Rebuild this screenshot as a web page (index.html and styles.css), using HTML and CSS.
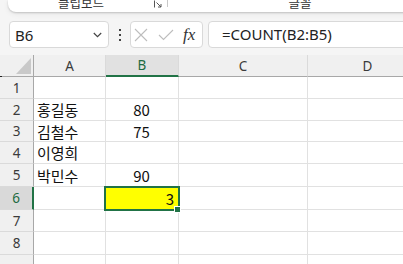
FILE: index.html
```html
<!DOCTYPE html>
<html lang="ko">
<head>
<meta charset="utf-8">
<link rel="stylesheet" href="styles.css">
</head>
<body>
<div class="app">
  <div class="ribbon">
    <div class="group g1">
      <span class="glabel">클립보드</span>
      <svg class="launcher" width="9" height="8" viewBox="0 0 9 8"><path d="M0.5 0.5V7.5" stroke="#555" fill="none"/><path d="M2.5 2.5L7 7M7 4V7H4" stroke="#555" fill="none"/></svg>
    </div>
    <div class="sep"></div>
    <div class="group g2"><span class="glabel">글꼴</span></div>
  </div>

  <div class="fbar">
    <div class="namebox">
      <span class="ref">B6</span>
      <svg class="chev" width="9" height="6" viewBox="0 0 9 6"><path d="M0.8 1L4.5 4.6L8.2 1" stroke="#444" stroke-width="1.2" fill="none"/></svg>
    </div>
    <div class="dots"><i></i><i></i><i></i></div>
    <div class="fxbox">
      <svg width="14" height="14" viewBox="0 0 14 14"><path d="M1 1L13 13M13 1L1 13" stroke="#bdbdbd" stroke-width="1.1" fill="none"/></svg>
      <svg width="16" height="12" viewBox="0 0 16 12"><path d="M1 6L5.5 10.5L15 1" stroke="#bdbdbd" stroke-width="1.1" fill="none"/></svg>
      <span class="fx">fx</span>
    </div>
    <div class="finput">=COUNT(B2:B5)</div>
  </div>

  <div class="sheet">
    <div class="grid">
      <div class="corner"><svg width="15" height="16" viewBox="0 0 15 16"><polygon points="15,0 15,16 0,16" fill="#c9c9c9"/></svg></div>
      <div class="ch">A</div>
      <div class="ch sel">B</div>
      <div class="ch">C</div>
      <div class="ch">D</div>

      <div class="rh">1</div><div class="c"></div><div class="c"></div><div class="c"></div><div class="c"></div>
      <div class="rh">2</div><div class="c">홍길동</div><div class="c ctr">80</div><div class="c"></div><div class="c"></div>
      <div class="rh">3</div><div class="c">김철수</div><div class="c ctr">75</div><div class="c"></div><div class="c"></div>
      <div class="rh">4</div><div class="c">이영희</div><div class="c ctr"></div><div class="c"></div><div class="c"></div>
      <div class="rh">5</div><div class="c">박민수</div><div class="c ctr">90</div><div class="c"></div><div class="c"></div>
      <div class="rh sel">6</div><div class="c"></div><div class="c num yellow">3</div><div class="c"></div><div class="c"></div>
      <div class="rh">7</div><div class="c"></div><div class="c"></div><div class="c"></div><div class="c"></div>
      <div class="rh">8</div><div class="c"></div><div class="c"></div><div class="c"></div><div class="c"></div>
      <div class="rh"></div><div class="c"></div><div class="c"></div><div class="c"></div><div class="c"></div>
    </div>
    <div class="selection"></div>
    <div class="handle"></div>
    <div class="tick"></div>
  </div>
</div>
</body>
</html>
```

FILE: styles.css
```css
* { box-sizing: border-box; }
html, body { margin: 0; padding: 0; }
body {
  width: 403px;
  height: 264px;
  overflow: hidden;
  background: #f5f5f5;
  font-family: "Noto Sans", "Noto Sans CJK KR", sans-serif;
  color: #222;
}
.app { width: 403px; height: 264px; overflow: hidden; background: #f5f5f5; }

/* ribbon */
.ribbon {
  margin-left: 8px;
  height: 12px;
  background: #fff;
  border-radius: 0 0 0 8px;
  box-shadow: 0 1px 2px rgba(0,0,0,0.18), 0 2px 6px rgba(0,0,0,0.06);
  display: flex;
  align-items: flex-start;
  overflow: hidden;
  width: 420px;
}
.group { display: flex; align-items: flex-start; height: 12px; flex: none; }
.g1 { width: 159px; }
.g1 .glabel { flex: 1; text-align: center; }
.g2 { width: 264px; justify-content: center; }
.glabel {
  font-family: "Noto Sans CJK KR", sans-serif;
  font-size: 12.5px;
  line-height: 13px;
  margin-top: -4px;
  color: #333;
}
.launcher { margin: 0 4px 0 0; flex: none; }
.sep { width: 1px; height: 7px; background: #c8c8c8; flex: none; }

/* formula bar */
.fbar {
  display: flex;
  align-items: center;
  margin-top: 9px;
  height: 27px;
  padding-left: 9px;
}
.fbar > * { flex: none; }
.namebox {
  width: 100px;
  height: 27px;
  background: #fff;
  border: 1px solid #d9d9d9;
  border-radius: 4px;
  display: flex;
  align-items: center;
  padding: 0 6px 0 5px;
  justify-content: space-between;
}
.ref { font-size: 15px; color: #222; }
.dots {
  width: 21px;
  display: flex;
  flex-direction: column;
  align-items: center;
  gap: 3px;
}
.dots i { width: 2px; height: 2px; background: #444; display: block; }
.fxbox {
  width: 73px;
  height: 27px;
  background: #fff;
  border: 1px solid #d9d9d9;
  border-radius: 4px;
  display: flex;
  align-items: center;
  padding-left: 3px;
  gap: 10px;
}
.fx {
  font-family: "Liberation Serif", serif;
  font-style: italic;
  font-size: 17px;
  color: #333;
  margin-left: -1px;
}
.finput {
  margin-left: 5px;
  width: 220px;
  height: 27px;
  background: #fff;
  border: 1px solid #d9d9d9;
  border-radius: 4px;
  font-size: 15px;
  line-height: 25px;
  padding-left: 13px;
  color: #222;
}

/* sheet */
.sheet { position: relative; margin-top: 7px; }
.grid {
  display: grid;
  grid-template-columns: 34px 72px 73px 129px 120px;
  grid-template-rows: 22px 22px 22px 21px 22px 23px 23px 22px 23px 22px;
  background: #fff;
}
.corner, .ch, .rh {
  background: #f0f0f0;
  color: #3b3b3b;
  font-size: 13.5px;
  display: flex;
  align-items: center;
  justify-content: center;
}
.corner {
  border-right: 1px solid #a8a8a8;
  border-bottom: 1px solid #a8a8a8;
  align-items: flex-end;
  justify-content: flex-end;
  padding: 0 2px 2px 0;
}
.ch {
  border-right: 1px solid #dadada;
  border-bottom: 1px solid #a8a8a8;
}
.ch.sel {
  background: #e1e1e1;
  color: #1e6b41;
  border-bottom: 2px solid #217346;
}
.rh {
  border-right: 1px solid #a8a8a8;
  border-bottom: 1px solid #dadada;
}
.rh.sel {
  background: #d9d9d9;
  color: #1e6b41;
  border-right: 2px solid #217346;
}
.c {
  border-right: 1px solid #e1e1e1;
  border-bottom: 1px solid #e1e1e1;
  font-family: "Noto Sans CJK KR", sans-serif;
  font-size: 15px;
  display: flex;
  align-items: center;
  padding: 0 4px 0 3px;
  color: #111;
  white-space: nowrap;
}
.c.ctr { justify-content: center; }
.c.num { justify-content: flex-end; }
.c.yellow { background: #ffff00; }

.selection {
  position: absolute;
  left: 104px;
  top: 131px;
  width: 76px;
  height: 25px;
  border: 2px solid #217346;
}
.handle {
  position: absolute;
  left: 174px;
  top: 151px;
  width: 7px;
  height: 7px;
  background: #217346;
  border: 1px solid #fff;
}
.tick {
  position: absolute;
  left: 0;
  top: 21px;
  width: 2px;
  height: 1px;
  background: #222;
}
```
